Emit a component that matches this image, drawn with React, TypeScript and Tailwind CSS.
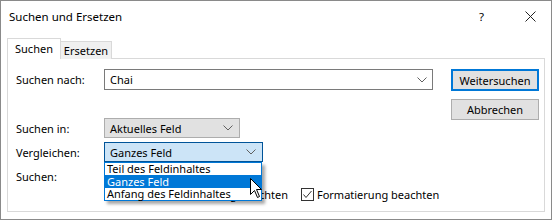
import React from 'react';

const font = { fontFamily: '"Noto Sans", "Segoe UI", sans-serif' };

const Chevron = ({ className = '' }: { className?: string }) => (
  <svg width="10" height="6" viewBox="0 0 10 6" className={className}>
    <polyline points="0.5,0.5 5,5 9.5,0.5" fill="none" stroke="#606060" strokeWidth="1" />
  </svg>
);

const Checkbox = ({ checked }: { checked?: boolean }) => (
  <span className="w-[13px] h-[13px] border border-[#333] bg-white flex items-center justify-center shrink-0">
    {checked && (
      <svg width="11" height="11" viewBox="0 0 11 11">
        <polyline points="1.5,5.5 4,8.5 9.5,2" fill="none" stroke="#333" strokeWidth="1" />
      </svg>
    )}
  </span>
);

const Cursor = () => (
  <svg width="13" height="21" viewBox="0 0 13 21" className="absolute left-[250px] top-[178px]">
    <path d="M0.5,0.5 L0.5,16.5 L4.5,12.5 L7.5,19.5 L9.5,18.5 L6.5,11.5 L11.5,11.5 Z" fill="#fff" stroke="#000" strokeWidth="1" strokeLinejoin="miter" />
  </svg>
);

export default function App() {
  return (
    <div className="w-[555px] h-[222px] bg-white text-[11px] leading-[15px] text-black relative whitespace-nowrap" style={font}>
      <div className="w-[552px] h-[220px] border border-[#8a8a8a] bg-white flex flex-col">
        {/* title bar */}
        <div className="h-[30px] flex items-center pl-[8px] shrink-0 text-[11.5px]">
          <span className="flex-1">Suchen und Ersetzen</span>
          <span className="w-[10px] mr-[36px]">?</span>
          <svg width="11" height="11" viewBox="0 0 11 11" className="mr-[15px]">
            <path d="M0.5,0.5 L10.5,10.5 M10.5,0.5 L0.5,10.5" stroke="#222" strokeWidth="1" />
          </svg>
        </div>

        {/* tabs */}
        <div className="flex items-end pl-[6px] mt-[7px] relative z-10 -mb-px">
          <div className="h-[21px] w-[54px] bg-white border border-b-0 border-[#d9d9d9] flex items-center justify-center pb-[1px]">
            Suchen
          </div>
          <div className="h-[18px] w-[51px] bg-[#f0f0f0] border border-l-0 border-b-0 border-[#d9d9d9] flex items-center justify-center">
            Ersetzen
          </div>
        </div>

        {/* panel */}
        <div className="ml-[6px] w-[538px] h-[154px] border border-[#d9d9d9] flex pt-[10px] pl-[8px] pr-[5px]">
          <div className="flex-1 flex flex-col">
            <div className="flex items-center h-[21px]">
              <span className="w-[88px]">Suchen nach:</span>
              <div className="w-[329px] h-[21px] border border-[#7a7a7a] flex items-center pl-[5px] pr-[5px]">
                <span className="flex-1">Chai</span>
                <Chevron />
              </div>
            </div>
            <div className="flex items-center h-[20px] mt-[28px]">
              <span className="w-[88px]">Suchen in:</span>
              <div className="w-[136px] h-[20px] border border-[#adadad] bg-[#e1e1e1] flex items-center pl-[5px] pr-[6px]">
                <span className="flex-1">Aktuelles Feld</span>
                <Chevron />
              </div>
            </div>
            <div className="flex items-center h-[20px] mt-[4px]">
              <span className="w-[88px]">Vergleichen:</span>
              <div className="w-[159px] h-[20px] border border-[#005499] bg-[#cce4f7] flex items-center pl-[5px] pr-[6px]">
                <span className="flex-1">Ganzes Feld</span>
                <Chevron />
              </div>
            </div>
            <div className="flex items-center h-[20px] mt-[4px]">
              <span className="w-[88px]">Suchen:</span>
            </div>
            <div className="flex items-center h-[15px] mt-[1px] pl-[88px]">
              <Checkbox />
              <span className="ml-[3px]">Groß-/Kleinschreibung beachten</span>
              <span className="ml-[13px]">
                <Checkbox checked />
              </span>
              <span className="ml-[3px]">Formatierung beachten</span>
            </div>
          </div>
          <div className="w-[88px] flex flex-col">
            <div className="h-[22px] border-2 border-[#0078d7] bg-[#e1e1e1] flex items-center justify-center">
              Weitersuchen
            </div>
            <div className="h-[21px] mt-[8px] border border-[#adadad] bg-[#e1e1e1] flex items-center justify-center">
              Abbrechen
            </div>
          </div>
        </div>
      </div>

      {/* open dropdown list */}
      <div className="absolute left-[104px] top-[162px] w-[158px] h-[39px] bg-white border border-[#0078d7] shadow-[3px_3px_3px_rgba(0,0,0,0.35)] flex flex-col leading-[12px]">
        <div className="h-[12px] pl-[2px] flex items-center">Teil des Feldinhaltes</div>
        <div className="h-[13px] pl-[2px] flex items-center bg-[#0078d7] text-white">Ganzes Feld</div>
        <div className="h-[12px] pl-[2px] flex items-center">Anfang des Feldinhaltes</div>
      </div>
      <Cursor />
    </div>
  );
}
